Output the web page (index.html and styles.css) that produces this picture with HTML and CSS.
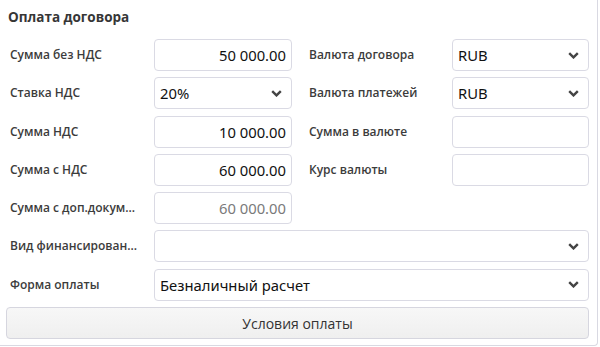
FILE: index.html
```html
<!DOCTYPE html>
<html>
<head>
    <meta charset="utf-8">
    <title>Оплата договора</title>
    <link rel="stylesheet" href="styles.css">
</head>
<body>
    <div class="panel">
        <div class="panel-title">Оплата договора</div>

        <div class="form-grid">
            <div class="label">Сумма без НДС</div>
            <div class="field num">50 000.00</div>
            <div class="label right">Валюта договора</div>
            <div class="field select">RUB <span class="chev"><svg width="11" height="7" viewBox="0 0 11 7"><path d="M1.2 1.2 L5.5 5.4 L9.8 1.2" fill="none" stroke="#444" stroke-width="2.4"/></svg></span></div>

            <div class="label">Ставка НДС</div>
            <div class="field select">20% <span class="chev"><svg width="11" height="7" viewBox="0 0 11 7"><path d="M1.2 1.2 L5.5 5.4 L9.8 1.2" fill="none" stroke="#444" stroke-width="2.4"/></svg></span></div>
            <div class="label right">Валюта платежей</div>
            <div class="field select">RUB <span class="chev"><svg width="11" height="7" viewBox="0 0 11 7"><path d="M1.2 1.2 L5.5 5.4 L9.8 1.2" fill="none" stroke="#444" stroke-width="2.4"/></svg></span></div>

            <div class="label">Сумма НДС</div>
            <div class="field num">10 000.00</div>
            <div class="label right">Сумма в валюте</div>
            <div class="field"></div>

            <div class="label">Сумма с НДС</div>
            <div class="field num">60 000.00</div>
            <div class="label right">Курс валюты</div>
            <div class="field"></div>

            <div class="label" title="Сумма с доп.документами">Сумма с доп.докум...</div>
            <div class="field num disabled">60 000.00</div>
            <div class="spacer"></div>

            <div class="label" title="Вид финансирования">Вид финансирован...</div>
            <div class="field select wide"><span class="chev"><svg width="11" height="7" viewBox="0 0 11 7"><path d="M1.2 1.2 L5.5 5.4 L9.8 1.2" fill="none" stroke="#444" stroke-width="2.4"/></svg></span></div>

            <div class="label">Форма оплаты</div>
            <div class="field select wide">Безналичный расчет <span class="chev"><svg width="11" height="7" viewBox="0 0 11 7"><path d="M1.2 1.2 L5.5 5.4 L9.8 1.2" fill="none" stroke="#444" stroke-width="2.4"/></svg></span></div>

            <button class="terms-btn">Условия оплаты</button>
        </div>
    </div>
</body>
</html>
```

FILE: styles.css
```css
body {
    background-color: #fff;
    font-family: "Open Sans", sans-serif;
    margin: 0;
    padding: 0;
}
.panel {
    width: 591px;
    height: 345px;
    padding: 0 0 0 6px;
    border-right: 1px solid #d9d9e2;
    border-bottom: 1px solid #d9d9e2;
    border-radius: 0 0 4px 0;
    box-sizing: content-box;
}
.panel-title {
    font-size: 13.5px;
    font-weight: bold;
    color: #363636;
    padding: 8px 0 0 2px;
    height: 39px;
    box-sizing: border-box;
}
.form-grid {
    display: grid;
    grid-template-columns: 148px 138px 160px 137px;
    grid-auto-rows: 32px;
    row-gap: 6.3px;
}
.label {
    font-size: 12px;
    font-weight: 600;
    color: #3c3c3c;
    padding: 7px 2px 0 4px;
    white-space: nowrap;
    overflow: hidden;
}
.label.right {
    padding-left: 17px;
}
.field {
    border: 1px solid #dadae4;
    border-radius: 4px;
    background: #fff;
    font-family: "Noto Sans", sans-serif;
    font-size: 14.8px;
    color: #111;
    display: flex;
    align-items: center;
    padding: 0 5px;
    box-sizing: border-box;
}
.field.num {
    justify-content: flex-end;
}
.field.disabled {
    color: #7a7a7a;
}
.field.select {
    justify-content: space-between;
}
.field.wide {
    grid-column: 2 / 5;
}
.chev {
    display: flex;
    margin-left: auto;
    padding-right: 4px;
}
.spacer {
    grid-column: 3 / 5;
}
.terms-btn {
    grid-column: 1 / 5;
    font-family: "Open Sans", sans-serif;
    font-size: 14px;
    color: #333;
    background: linear-gradient(#f7f7f7, #efefef);
    border: 1px solid #d6d6df;
    border-radius: 4px;
    height: 32px;
}
```
